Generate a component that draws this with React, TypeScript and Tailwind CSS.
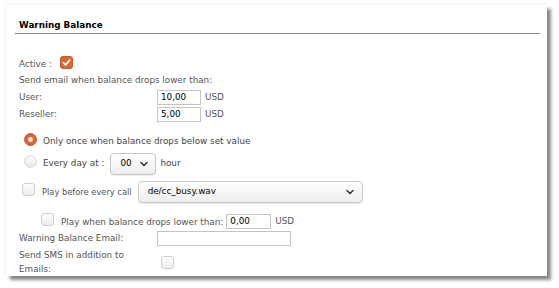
import { ChevronDown } from "lucide-react";

const font = { fontFamily: '"DejaVu Sans", Verdana, sans-serif' };

function Check({ on = false }: { on?: boolean }) {
  if (on) {
    return (
      <span className="inline-flex w-[13px] h-[13px] rounded-[3px] bg-[#d4683c] border border-[#c25a31] items-center justify-center shrink-0">
        <svg width="9" height="9" viewBox="0 0 10 10">
          <path d="M1.5 5.2 L4 7.6 L8.6 2.4" fill="none" stroke="#fff" strokeWidth="1.9" strokeLinecap="round" strokeLinejoin="round" />
        </svg>
      </span>
    );
  }
  return <span className="inline-block w-[13px] h-[13px] rounded-[3px] border border-[#cfcfcf] bg-gradient-to-b from-white to-[#ececec] shrink-0" />;
}

function Radio({ on = false }: { on?: boolean }) {
  return (
    <svg width="13" height="13" viewBox="0 0 13 13" className="shrink-0 block">
      {on ? (
        <>
          <circle cx="6.5" cy="6.5" r="6" fill="#d4683c" stroke="#c25a31" strokeWidth="1" />
          <circle cx="6.5" cy="6.5" r="2.4" fill="#f8e2d8" />
        </>
      ) : (
        <>
          <defs>
            <linearGradient id="rg" x1="0" y1="0" x2="0" y2="1">
              <stop offset="0" stopColor="#fff" />
              <stop offset="1" stopColor="#e9e9e9" />
            </linearGradient>
          </defs>
          <circle cx="6.5" cy="6.5" r="5.8" fill="url(#rg)" stroke="#d2d2d2" strokeWidth="1" />
        </>
      )}
    </svg>
  );
}

function Box({ value = "", w }: { value?: string; w: string }) {
  return (
    <span className={`inline-flex items-center h-[15px] border border-[#c4c4c4] bg-white px-[3px] text-black ${w}`}>
      {value}
    </span>
  );
}

export default function App() {
  return (
    <div className="w-[559px] h-[288px] bg-white pl-[6px] pt-[5px] text-[8.8px] text-[#555]" style={font}>
      <div className="w-[541px] h-[271px] bg-white shadow-[4px_4px_3px_rgba(0,0,0,0.45),0_0_3px_rgba(0,0,0,0.12)]">
        {/* header */}
        <div className="ml-[9px] mr-[7px] pt-[14px] border-b border-[#858585]">
          <div className="pl-[4px] h-[14px] leading-[12px] font-bold text-black">Warning Balance</div>
        </div>

        <div className="pl-[13px] pt-[21px]">
          <div className="flex items-center h-[17px] gap-[8px]">
            <span className="mt-[2px]">Active :</span>
            <span className="flex -mt-[3px]"><Check on /></span>
          </div>
          <div className="flex items-center h-[17px]">Send email when balance drops lower than:</div>
          <div className="flex items-center h-[17px]">
            <span className="w-[138px]">User:</span>
            <Box value="10,00" w="w-[44px]" />
            <span className="ml-[4px]">USD</span>
          </div>
          <div className="flex items-center h-[17px]">
            <span className="w-[138px]">Reseller:</span>
            <Box value="5,00" w="w-[44px]" />
            <span className="ml-[4px]">USD</span>
          </div>

          {/* radio options */}
          <div className="flex items-center h-[22px] mt-[8px] pl-[5px] gap-[6px]">
            <span className="flex -mt-[6px]"><Radio on /></span>
            <span className="text-[#444]">Only once when balance drops below set value</span>
          </div>
          <div className="flex items-center h-[22px] pl-[5px] gap-[6px]">
            <span className="flex -mt-[6px]"><Radio /></span>
            <span className="text-[#444]">Every day at :</span>
            <span className="inline-flex items-center justify-between w-[46px] h-[22px] rounded-[4px] border border-[#c8c8c8] bg-gradient-to-b from-white to-[#eeeeee] pl-[9px] pr-[5px] text-black shadow-[0_1px_1px_rgba(0,0,0,0.08)]">
              00
              <ChevronDown size={12} strokeWidth={3} className="text-[#333]" />
            </span>
            <span className="-ml-[2px] text-[#444]">hour</span>
          </div>

          {/* sound */}
          <div className="flex items-center h-[22px] mt-[6px] pl-[3px]">
            <span className="flex -mt-[6px]"><Check /></span>
            <span className="ml-[7px] text-[8.3px]">Play before every call</span>
            <span className="ml-[6px] inline-flex items-center justify-between w-[225px] h-[22px] rounded-[4px] border border-[#c8c8c8] bg-gradient-to-b from-white to-[#eeeeee] pl-[9px] pr-[6px] text-black shadow-[0_1px_1px_rgba(0,0,0,0.08)]">
              de/cc_busy.wav
              <ChevronDown size={12} strokeWidth={3} className="text-[#333]" />
            </span>
          </div>

          <div className="flex items-center h-[17px] mt-[10px] pl-[22px]">
            <span className="flex -mt-[4px]"><Check /></span>
            <span className="ml-[7px] mt-[2px]">Play when balance drops lower than:</span>
            <span className="ml-[3px] flex"><Box value="0,00" w="w-[45px]" /></span>
            <span className="ml-[4px]">USD</span>
          </div>

          <div className="flex items-center h-[17px]">
            <span className="w-[138px]">Warning Balance Email:</span>
            <Box w="w-[134px]" />
          </div>

          <div className="flex items-center h-[30px]">
            <span className="w-[142px] leading-[14px]">
              Send SMS in addition to
              <br />
              Emails:
            </span>
            <Check />
          </div>
        </div>
      </div>
    </div>
  );
}
